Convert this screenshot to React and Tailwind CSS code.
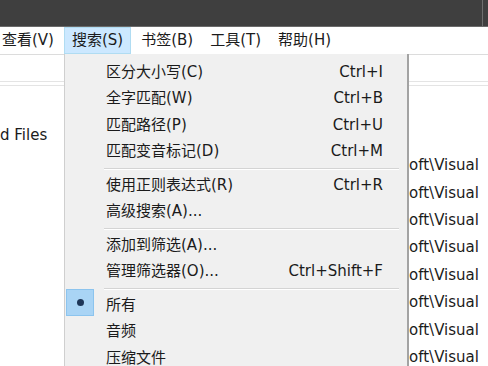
import React from 'react';

const font = "font-['DejaVu_Sans','Noto_Sans_CJK_SC',sans-serif]";

const menuBar = ['查看(V)', '搜索(S)', '书签(B)', '工具(T)', '帮助(H)'];

// menu rows: sep = separator
const menuItems = [
  { label: '区分大小写(C)', key: 'Ctrl+I' },
  { label: '全字匹配(W)', key: 'Ctrl+B' },
  { label: '匹配路径(P)', key: 'Ctrl+U' },
  { label: '匹配变音标记(D)', key: 'Ctrl+M' },
  { sep: true },
  { label: '使用正则表达式(R)', key: 'Ctrl+R' },
  { label: '高级搜索(A)...' },
  { sep: true },
  { label: '添加到筛选(A)...' },
  { label: '管理筛选器(O)...', key: 'Ctrl+Shift+F' },
  { sep: true },
  { label: '所有', checked: true },
  { label: '音频' },
  { label: '压缩文件' },
];

const MenuRow = ({ item }) => {
  if (item.sep) {
    return (
      <div className="h-[7px] flex flex-col justify-center pl-[39px] pr-[8px]">
        <div className="h-px bg-[#d4d4d4]" />
        <div className="h-px bg-white" />
      </div>
    );
  }
  return (
    <div className="relative h-[26.5px] flex items-center pl-[41px] pr-[24px]">
      {item.checked && (
        <div className="absolute left-[1px] top-[-3px] w-[28px] h-[27px] bg-[#a9d4f5] border border-[#8cc4ee] flex items-center justify-center">
          <div className="w-[7px] h-[7px] rounded-full bg-[#1d3557]" />
        </div>
      )}
      <span className="flex-1 text-[#1b1b1b]">{item.label}</span>
      {item.key && <span className="text-[#1b1b1b]">{item.key}</span>}
    </div>
  );
};

export default function App() {
  return (
    <div className={`relative w-[488px] h-[366px] overflow-hidden bg-white text-[15px] leading-none ${font}`}>
      {/* title bar */}
      <div className="h-[27px] bg-[#3f3f3f] border-b border-[#6a6a6a] flex justify-end">
        <div className="w-px bg-[#6e6e6e] mr-[5px]" />
      </div>

      {/* menu bar */}
      <div className="h-[27px] flex items-stretch gap-[3px] ml-[-5px] text-[#1b1b1b]">
        {menuBar.map((m, i) => (
          <div
            key={m}
            className={`px-[7px] flex items-center ${i === 1 ? 'bg-[#cce8ff] border border-[#b0dcf2] px-[6px]' : ''}`}
          >
            {m}
          </div>
        ))}
      </div>

      {/* toolbar strip */}
      <div className="h-[27px] border-t border-[#dcdcdc]" />
      <div className="h-[5px] border-t border-[#c8c8c8] border-b border-[#e4e4e4]" />

      {/* content */}
      <div className="flex">
        <div className="w-[64px] pt-[36px] text-[#1b1b1b] whitespace-nowrap">
          <div className="h-[27px] flex items-center">d Files</div>
        </div>
        <div className="flex-1" />
        <div className="w-[79px] pt-[66px] overflow-hidden text-[#1b1b1b]">
          {Array.from({ length: 8 }).map((_, i) => (
            <div key={i} className="h-[27.4px] flex items-center whitespace-nowrap">oft\Visual</div>
          ))}
        </div>
      </div>

      {/* dropdown menu */}
      <div className="absolute left-[64px] top-[54px] w-[345px] h-[330px] bg-[#f0f0f0] border-l border-[#cfcfcf] border-r-2 border-r-[#a3a3a3] pt-[5px]">
        {menuItems.map((item, i) => (
          <MenuRow key={i} item={item} />
        ))}
      </div>
    </div>
  );
}
